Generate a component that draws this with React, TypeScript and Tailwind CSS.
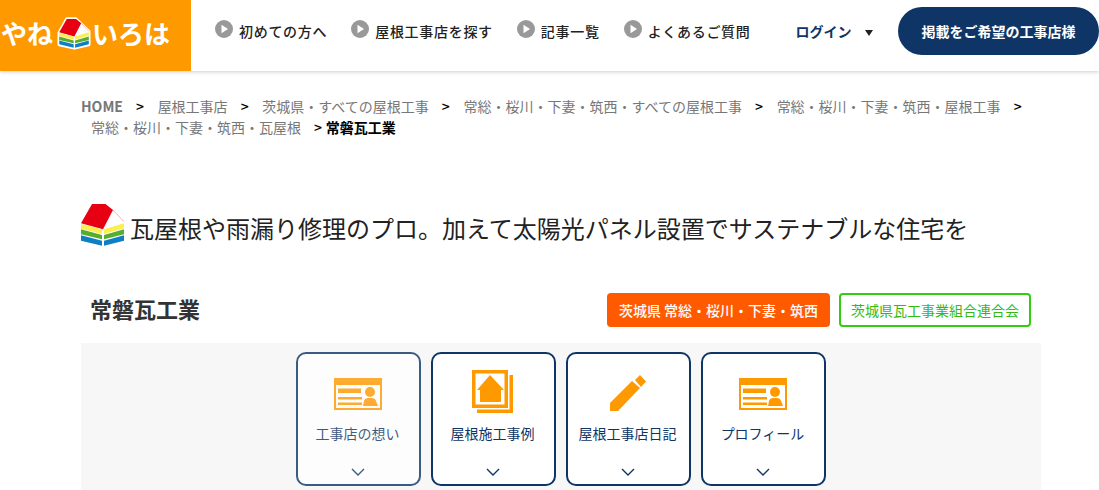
const navItems = [
  { label: "初めての方へ", gap: "mr-[24px]" },
  { label: "屋根工事店を探す", gap: "mr-[24px]" },
  { label: "記事一覧", gap: "mr-[24px]" },
  { label: "よくあるご質問", gap: "mr-[45px]" },
];

const crumbs = [
  "屋根工事店",
  "茨城県・すべての屋根工事",
  "常総・桜川・下妻・筑西・すべての屋根工事",
  "常総・桜川・下妻・筑西・屋根工事",
  "常総・桜川・下妻・筑西・瓦屋根",
];

function House({ className, outline }: { className: string; outline?: boolean }) {
  return (
    <svg viewBox={outline ? "-3 -3 49 48" : "0 0 43 42"} className={className}>
      {outline && (
        <path d="M11 0 L24 0 L43 18 L43 37 L22 42 L0 37 L0 20 Z" fill="#fff" stroke="#fff" strokeWidth="5" strokeLinejoin="round" />
      )}
      <path d="M11 0 L24.5 0 L32 6 L22 25.3 L0 19.3 Z" fill="#e60012" />
      <path d="M32 6 L43 17.7" fill="none" stroke="#f2a0a0" strokeWidth="0.8" />
      <path d="M0 20 L21 25.3 L21 30 L0 24.7 Z" fill="#fdee4f" />
      <path d="M23 25.3 L43 19.3 L43 24.3 L23 30 Z" fill="#fdee4f" />
      <path d="M0 25.3 L21 31 L21 35.3 L0 30.3 Z" fill="#56ad2f" />
      <path d="M23 31 L43 25.3 L43 30.3 L23 35.3 Z" fill="#56ad2f" />
      <path d="M0 31.3 L21 36.7 L21 41.7 L0 36.7 Z" fill="#0f7fc4" />
      <path d="M23 36.7 L43 31.3 L43 36.7 L23 41.7 Z" fill="#0f7fc4" />
    </svg>
  );
}

function PlayDot() {
  return (
    <svg viewBox="0 0 18 18" className="w-[18px] h-[18px] mr-[6px] -mt-[4px] shrink-0">
      <circle cx="9" cy="9" r="9" fill="#999999" />
      <path d="M6.5 4.8 L13 9 L6.5 13.2 Z" fill="#fff" />
    </svg>
  );
}

function CardIcon() {
  return (
    <svg viewBox="0 0 48 32" className="w-[48px] h-[32px] mb-[3px]">
      <path fillRule="evenodd" d="M0 0 H48 V32 H0 Z M2 7 V30 H46 V7 Z" fill="#ff9900" />
      <rect x="4" y="10.5" width="23" height="4.5" fill="#ff9900" />
      <rect x="4" y="19" width="24" height="2.5" fill="#ff9900" />
      <rect x="4" y="24.5" width="24" height="2.5" fill="#ff9900" />
      <circle cx="36" cy="14" r="5" fill="#ff9900" />
      <path d="M29 28 L30 23 C31 20 33 20 36 20 C39 20 41 20 42 23 L44 28 Z" fill="#ff9900" />
    </svg>
  );
}

function PhotosIcon() {
  return (
    <svg viewBox="0 0 41 43" className="w-[41px] h-[43px]">
      <path d="M37.5 5 H41 V43 H5 V39.5 H37.5 Z" fill="#ff9900" />
      <path fillRule="evenodd" d="M0 0 H36 V38 H0 Z M3.5 3.5 V34.5 H32.5 V3.5 Z" fill="#ff9900" />
      <path d="M18 5 L32 20 H29 V32 H8 V20 H5 Z" fill="#ff9900" />
    </svg>
  );
}

function PencilIcon() {
  return (
    <svg viewBox="0 0 36 36" className="w-[36px] h-[36px] mb-[2px]">
      <path d="M0 28 L22 6 L30 13 L8 36 H0 Z" fill="#ff9900" />
      <path d="M25 5 L30 0 L36 6.5 L31 12 Z" fill="#ff9900" />
    </svg>
  );
}

function Chevron() {
  return (
    <svg viewBox="0 0 14 8" className="w-[14px] h-[8px]">
      <path d="M1 1 L7 7 L13 1" fill="none" stroke="#0e3566" strokeWidth="1.4" />
    </svg>
  );
}

const cards = [
  { label: "工事店の想い", icon: <CardIcon />, faded: true },
  { label: "屋根施工事例", icon: <PhotosIcon />, faded: false },
  { label: "屋根工事店日記", icon: <PencilIcon />, faded: false },
  { label: "プロフィール", icon: <CardIcon />, faded: false },
];

export default function App() {
  return (
    <div className="h-[490px] overflow-hidden bg-white text-black font-['Noto_Sans_CJK_JP','Noto_Sans',sans-serif]">
      <header className="flex h-[71px] bg-white shadow-[0_1px_4px_rgba(0,0,0,0.2)]">
        <div className="flex items-center w-[191px] h-full pl-[1px] bg-[#ff9900] text-white text-[26px] font-bold leading-none mr-[24px] shrink-0">
          <span className="-mt-[5px]">やね</span>
          <House outline className="w-[34px] h-[33px] ml-[4px] mr-[1px] -mt-[4px] shrink-0" />
          <span className="-mt-[5px]">いろは</span>
        </div>
        <div className="flex items-center pb-[9px] whitespace-nowrap">
          <nav className="flex items-center">
            {navItems.map((item) => (
              <a key={item.label} className={`flex items-center text-[14px] font-medium tracking-[0.05em] text-[#222] ${item.gap}`}>
                <PlayDot />
                {item.label}
              </a>
            ))}
          </nav>
          <div className="flex items-center text-[14px] font-bold text-[#0e3566] mr-[25px]">
            ログイン
            <span className="ml-[13px] mt-[3px] w-0 h-0 border-x-[4.5px] border-x-transparent border-t-[6px] border-t-[#222]" />
          </div>
          <a className="flex items-center justify-center w-[201px] h-[48px] pl-[1px] shrink-0 rounded-[24px] bg-[#0e3566] text-white text-[14px] font-bold">
            掲載をご希望の工事店様
          </a>
        </div>
      </header>

      <main className="pl-[81px] pr-[58px]">
        <ol className="flex flex-wrap text-[14px] leading-[21px] pt-[25px] text-[#777]">
          <li className="flex font-bold">
            HOME<span className="ml-[13px] mr-[3.7px] w-[8px] text-black font-medium">&gt;</span>
          </li>
          {crumbs.map((c) => (
            <li key={c} className="flex pl-[10px]">
              {c}
              <span className="ml-[13px] mr-[3.7px] w-[8px] text-black font-medium">&gt;</span>
            </li>
          ))}
          <li className="font-bold text-black">常磐瓦工業</li>
        </ol>

        <h1 className="flex items-center mt-[65px] text-[24px] leading-[44px] text-[#222]">
          <House className="w-[43px] h-[42px] mr-[6px] shrink-0" />
          <span className="translate-y-[3px]">瓦屋根や雨漏り修理のプロ。加えて太陽光パネル設置でサステナブルな住宅を</span>
        </h1>

        <div className="flex items-center mt-[46px] pl-[10px] pr-[10px]">
          <h2 className="-ml-[1px] -mt-[3px] text-[22px] font-bold text-[#333] mr-auto">常磐瓦工業</h2>
          <span className="flex items-center justify-center w-[223px] h-[34px] rounded-[4px] bg-[#ff5a00] text-white text-[14px] font-medium">
            茨城県 常総・桜川・下妻・筑西
          </span>
          <span className="flex items-center justify-center ml-[9px] w-[192px] h-[34px] rounded-[4px] border-2 border-[#33cc11] text-[#33bb11] text-[14px]">
            茨城県瓦工事業組合連合会
          </span>
        </div>

        <section className="flex justify-center gap-[10px] mt-[16px] pt-[9px] pb-[10px] bg-[#f7f7f7]">
          {cards.map((card) => (
            <div
              key={card.label}
              className={`flex flex-col items-center w-[125px] h-[134px] pr-[2px] rounded-[10px] border-2 border-[#0e3566] bg-white ${card.faded ? "opacity-80" : ""}`}
            >
              <div className="flex items-end justify-center h-[59px]">{card.icon}</div>
              <div className="mt-[10px] text-[14px] leading-[20px] text-[#0e3566]">{card.label}</div>
              <div className="mt-auto mb-[8px]">
                <Chevron />
              </div>
            </div>
          ))}
        </section>
      </main>
    </div>
  );
}
